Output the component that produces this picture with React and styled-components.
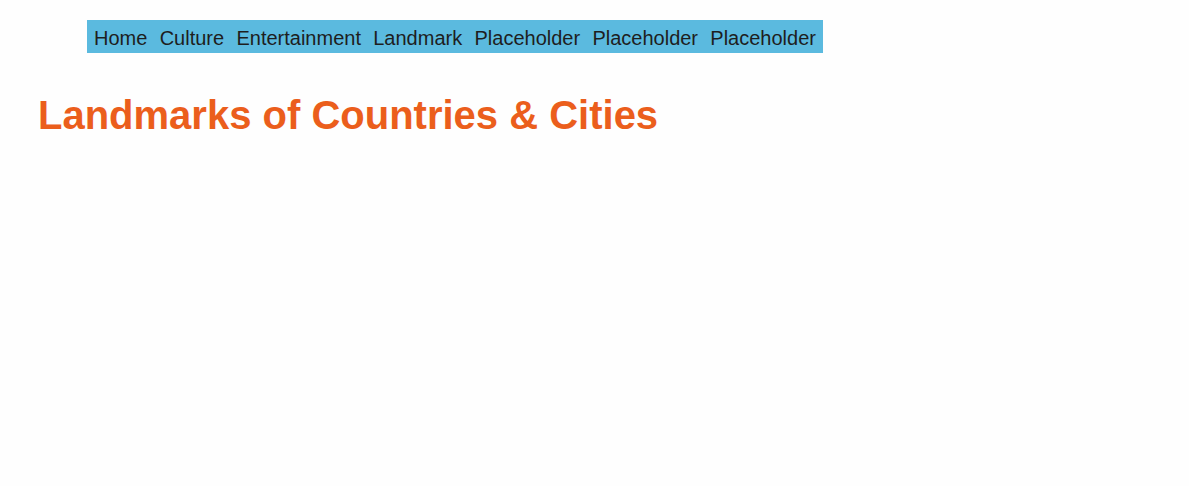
import React from 'react';
import styled, { createGlobalStyle } from 'styled-components';

const GlobalStyle = createGlobalStyle`
	html, body {
		margin: 0;
		background: #fefefe;
		font-family: "Liberation Sans", Arial, sans-serif;
	}
`;

const links = ['Home', 'Culture', 'Entertainment', 'Landmark', 'Placeholder', 'Placeholder', 'Placeholder'];

const App = () => {
	return (
		<>
			<GlobalStyle />
			<Page>
				<Navbar>
					{links.map((label, i) => (
						<NavLink key={i} href="#">
							{label}
						</NavLink>
					))}
				</Navbar>
				<Title>Landmarks of Countries &amp; Cities</Title>
			</Page>
		</>
	);
};

export default App;

const Page = styled.div`
	padding: 20px 0 0 0;
`;

const Navbar = styled.nav`
	display: flex;
	align-items: flex-start;
	column-gap: 12.3px;
	width: max-content;
	margin-left: 87px;
	height: 33px;
	box-sizing: border-box;
	padding: 7px 7px 0 7px;
	background: #5bbadf;
`;

const NavLink = styled.a`
	font-size: 20px;
	line-height: 23px;
	color: #1e1e1e;
	text-decoration: none;
`;

const Title = styled.h1`
	margin: 39px 0 0 38px;
	font-size: 40px;
	line-height: 46px;
	font-weight: bold;
	color: #eb5e1c;
`;
